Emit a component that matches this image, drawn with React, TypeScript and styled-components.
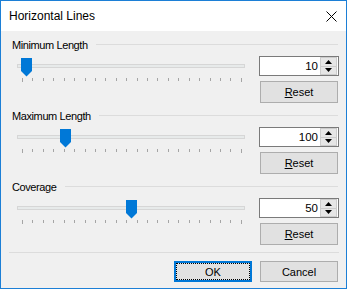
import React from 'react';
import styled, { createGlobalStyle } from 'styled-components';

const colors = {
  accent: '#1c7fd6',
  focus: '#0078d7',
  face: '#f0f0f0',
  button: '#e1e1e1',
  buttonBorder: '#adadad',
  etch: '#dcdcdc',
  track: '#e7eaea',
  trackBorder: '#d6d6d6',
  tick: '#a5a5a5',
  text: '#000000',
};

const GlobalStyle = createGlobalStyle`
  html, body {
    margin: 0;
    padding: 0;
    background: #ffffff;
  }
  body {
    font-family: "Liberation Sans", Arial, sans-serif;
  }
`;

type Setting = {
  label: string;
  value: number;
  thumb: number;
};

const settings: Setting[] = [
  { label: 'Minimum Length', value: 10, thumb: 9 },
  { label: 'Maximum Length', value: 100, thumb: 48 },
  { label: 'Coverage', value: 50, thumb: 114 },
];

const TICKS = 22;

const CloseIcon = () => (
  <svg width="11" height="11" viewBox="0 0 11 11">
    <path d="M0.5 0.5 L10.5 10.5 M10.5 0.5 L0.5 10.5" stroke="#000" strokeWidth="1" />
  </svg>
);

const ThumbIcon = () => (
  <svg width="11" height="19" viewBox="0 0 11 19">
    <path d="M0 0 H11 V13 L5.5 18.5 L0 13 Z" fill={colors.focus} />
  </svg>
);

const Arrow = ({ up }: { up?: boolean }) => (
  <svg width="7" height="4" viewBox="0 0 7 4">
    <path d={up ? 'M0 4 L3.5 0 L7 4 Z' : 'M0 0 L7 0 L3.5 4 Z'} fill="#000" />
  </svg>
);

const SettingGroup = ({ label, value, thumb }: Setting) => (
  <Group>
    <Header>
      <Label>{label}</Label>
      <Etch />
    </Header>
    <Row>
      <SliderBox>
        <Track />
        <Thumb style={{ left: thumb }}>
          <ThumbIcon />
        </Thumb>
        <Ticks>
          {Array.from({ length: TICKS }).map((_, i) => (
            <Tick key={i} end={i === 0 || i === TICKS - 1} />
          ))}
        </Ticks>
      </SliderBox>
      <Controls>
        <NumBox>
          <NumValue>{value}</NumValue>
          <Spin>
            <SpinHalf>
              <Arrow up />
            </SpinHalf>
            <SpinHalf>
              <Arrow />
            </SpinHalf>
          </Spin>
        </NumBox>
        <ResetButton>
          <u>R</u>eset
        </ResetButton>
      </Controls>
    </Row>
  </Group>
);

export default function App() {
  return (
    <>
      <GlobalStyle />
      <Window>
        <TitleBar>
          <Title>Horizontal Lines</Title>
          <CloseButton>
            <CloseIcon />
          </CloseButton>
        </TitleBar>
        <Body>
          {settings.map(s => (
            <SettingGroup key={s.label} {...s} />
          ))}
          <Separator />
          <Buttons>
            <OkButton>OK</OkButton>
            <CancelButton>Cancel</CancelButton>
          </Buttons>
        </Body>
      </Window>
    </>
  );
}

const Window = styled.div`
  width: 347px;
  height: 289px;
  box-sizing: border-box;
  border: 1px solid ${colors.accent};
  display: flex;
  flex-direction: column;
  background: ${colors.face};
`;

const TitleBar = styled.div`
  height: 30px;
  flex-shrink: 0;
  background: #ffffff;
  display: flex;
  align-items: center;
  justify-content: space-between;
  padding: 0 9px 0 8px;
`;

const Title = styled.div`
  font-size: 12px;
  color: ${colors.text};
`;

const CloseButton = styled.div`
  display: flex;
  align-items: center;
  padding-top: 1px;
`;

const Body = styled.div`
  flex: 1;
  display: flex;
  flex-direction: column;
  padding: 8px 7px 0 11px;
  font-size: 11px;
  color: ${colors.text};
`;

const Group = styled.div`
  display: flex;
  flex-direction: column;
  padding-bottom: 7px;
`;

const Header = styled.div`
  height: 12px;
  display: flex;
  align-items: center;
  gap: 8px;
`;

const Label = styled.span`
  letter-spacing: -0.4px;
  white-space: nowrap;
  line-height: 12px;
`;

const Etch = styled.div`
  flex: 1;
  height: 1px;
  margin: 0 1px 1px 0;
  background: ${colors.etch};
`;

const Row = styled.div`
  margin-top: 5px;
  display: flex;
  justify-content: space-between;
`;

const SliderBox = styled.div`
  position: relative;
  width: 240px;
  height: 30px;
`;

const Track = styled.div`
  position: absolute;
  left: 5px;
  top: 8px;
  width: 228px;
  height: 4px;
  box-sizing: border-box;
  border: 1px solid ${colors.trackBorder};
  background: ${colors.track};
`;

const Thumb = styled.div`
  position: absolute;
  top: 2px;
  display: flex;
`;

const Ticks = styled.div`
  position: absolute;
  left: 10px;
  top: 22px;
  width: 220px;
  display: flex;
  justify-content: space-between;
  align-items: flex-start;
`;

const Tick = styled.div<{ end?: boolean }>`
  width: 1px;
  height: ${props => (props.end ? 4 : 3)}px;
  background: ${colors.tick};
`;

const Controls = styled.div`
  width: 80px;
  display: flex;
  flex-direction: column;
  gap: 5px;
`;

const NumBox = styled.div`
  height: 20px;
  box-sizing: border-box;
  border: 1px solid #7a7a7a;
  background: #ffffff;
  display: flex;
  align-items: stretch;
`;

const NumValue = styled.div`
  flex: 1;
  text-align: right;
  font-size: 11.5px;
  line-height: 18px;
  padding-right: 1px;
`;

const Spin = styled.div`
  width: 17px;
  margin: 0 1px 0 1px;
  display: flex;
  flex-direction: column;
`;

const SpinHalf = styled.div`
  flex: 1;
  display: flex;
  align-items: center;
  justify-content: center;
  background: #e6e6e6;
  border: 1px solid #cccccc;
  & + & {
    border-top: none;
  }
`;

const BaseButton = styled.div`
  height: 21px;
  width: 78px;
  box-sizing: border-box;
  display: flex;
  align-items: center;
  justify-content: center;
  background: ${colors.button};
  border: 1px solid ${colors.buttonBorder};
  font-size: 11px;
`;

const ResetButton = styled(BaseButton)`
  margin: 0 1px;
  height: 22px;
`;

const Separator = styled.div`
  height: 1px;
  margin-left: -3px;
  background: ${colors.etch};
`;

const Buttons = styled.div`
  margin-top: 8px;
  display: flex;
  justify-content: flex-end;
  gap: 8px;
  padding-right: 1px;
`;

const OkButton = styled(BaseButton)`
  position: relative;
  border: 2px solid ${colors.focus};
  &::after {
    content: '';
    position: absolute;
    inset: 0;
    border: 1px dotted #000;
  }
`;

const CancelButton = styled(BaseButton)``;
